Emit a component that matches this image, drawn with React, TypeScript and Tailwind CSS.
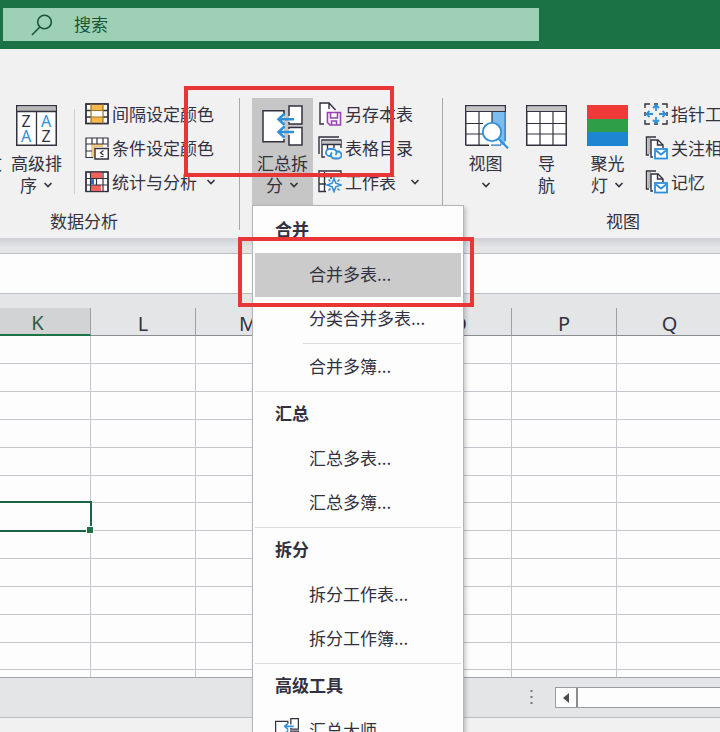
import type { ReactNode } from "react";

const INK = "#33313f";
const BLUE = "#2f8fd8";

function Chevron() {
  return (
    <svg width="10" height="8" viewBox="0 0 10 8" fill="none" stroke={INK} strokeWidth="1.6">
      <path d="M1.5 2 5 5.5 8.5 2" />
    </svg>
  );
}

/* ---------- large icons ---------- */

function SortIcon() {
  return (
    <svg width="41" height="41" viewBox="0 0 41 41">
      <rect x="0.75" y="0.75" width="39.5" height="39.5" fill="#fff" stroke={INK} strokeWidth="1.5" />
      <rect x="1.5" y="1.5" width="38" height="4.5" fill="#b9b9ba" />
      <path d="M1 6.5h39M20.5 6.5v34" stroke={INK} strokeWidth="1.3" />
      <g fontFamily="Noto Sans, sans-serif" fontSize="16" textAnchor="middle">
        <text x="10" y="22" fill={INK}>Z</text>
        <text x="30" y="22" fill={BLUE}>A</text>
        <text x="10" y="37" fill={BLUE}>A</text>
        <text x="30" y="37" fill={INK}>Z</text>
      </g>
    </svg>
  );
}

function MergeIcon({ size = 41 }: { size?: number }) {
  const stroke = size < 41 ? 2.2 : 1.5;
  return (
    <svg width={size} height={size} viewBox="0 0 41 41" fill="none">
      <path d="M22 5.700H0.8v31H22z" fill="#fff" />
      <path d="M22 9V5.700H1v31h21V34" stroke={INK} strokeWidth={stroke} />
      <rect x="27" y="1" width="13" height="18" fill="#fff" />
      <rect x="27" y="22.5" width="13" height="17.5" fill="#fff" />
      <path d="M27 11V1h13v18H27v-2M27 24v-1.500h13V40H27V30" stroke={INK} strokeWidth={stroke} />
      <path d="M32 14.300H17M32 27H17M22.500 8.700 16.500 14.300l6 5.600M22.500 21.400l-6 5.600 6 5.600" stroke={BLUE} strokeWidth="2.6" />
    </svg>
  );
}

function ViewIcon() {
  return (
    <svg className="shrink-0" width="44" height="44" viewBox="0 0 44 44" fill="none">
      <rect x="0.75" y="0.75" width="39.5" height="39.5" fill="#fff" />
      <rect x="27" y="7" width="13" height="33" fill="#7dbcee" />
      <path d="M27 29h8v11h-8z" fill="#fff" />
      <path d="M0.75 40.2V0.75h39.5V7M0.75 40.2H24" stroke={INK} strokeWidth="1.5" />
      <rect x="1.5" y="1.5" width="38" height="4.5" fill="#c4c4c5" />
      <path d="M1 6.500h39M14 6.500v34M27 6.500v12M1 18.500h17M1 29h17" stroke={INK} strokeWidth="1.2" />
      <path d="M40.200 7v29M26 40.200h10" stroke="#1f75bd" strokeWidth="1.3" />
      <circle cx="27" cy="27" r="9.2" fill="#fff" stroke={BLUE} strokeWidth="1.8" />
      <path d="m33.700 34 9.300 9.300" stroke={BLUE} strokeWidth="2" />
    </svg>
  );
}

function NavIcon() {
  return (
    <svg width="41" height="41" viewBox="0 0 41 41">
      <rect x="0.75" y="0.75" width="39.5" height="39.5" fill="#fff" stroke={INK} strokeWidth="1.5" />
      <rect x="1.5" y="1.5" width="38" height="4.5" fill="#c4c4c5" />
      <path d="M1 6.500h39M14 6.500v34M27 6.500v34M1 18.500h39M1 29h39" stroke={INK} strokeWidth="1.2" />
    </svg>
  );
}

function SpotlightIcon() {
  return (
    <svg width="41" height="41" viewBox="0 0 41 41">
      <path fill="#f03a37" d="M0 0h41v14H0z" />
      <path fill="#2f9e48" d="M0 14h41v13H0z" />
      <path fill="#1d86d3" d="M0 27h41v14H0z" />
    </svg>
  );
}

/* ---------- small icons ---------- */

function Small({ children }: { children: ReactNode }) {
  return (
    <svg className="shrink-0" width="24" height="24" viewBox="0 0 24 24" fill="none" stroke={INK} strokeWidth="1.4">
      {children}
    </svg>
  );
}

const IntervalIcon = () => (
  <Small>
    <rect x="1" y="2" width="22" height="19.5" fill="#fff" />
    <path d="M6 2h12v6H6zM6 15h12v6.500H6z" fill="#f9b84e" stroke="none" />
    <path d="M1 2h22v19.500H1zM1 8.500h5M18 8.500h5M1 15h5M18 15h5" />
    <path d="M6 2v19.500M18 2v19.500M6 8.500h12M6 15h12" stroke="#a3701f" strokeWidth="1.200" />
  </Small>
);

const ConditionIcon = () => (
  <Small>
    <path d="M1 2h22v19.500H1z" fill="#fff" stroke="none" />
    <path d="M7 8h11v3H10v11H6V8z" fill="#f9c878" stroke="none" />
    <path d="M8 21.500H1V2h22v9M1 8h22M1 15h6M7 2v6M12 2v6M18 2v6" strokeWidth="1.200" />
    <path d="M10 12.500h13.300V23H10z" fill="#fff" />
    <path d="m18.500 14.500-3 2.200 3 2.200M15.500 20.500h3" strokeWidth="1.200" />
  </Small>
);

const StatsIcon = () => (
  <Small>
    <rect x="1" y="2" width="22" height="19.500" fill="#fff" />
    <path d="M6 2h7v6H6zM6 15h10v6.500H6zM13 2h4v6h-4z" fill="#f4605d" stroke="none" />
    <path d="M1 2h22v19.500H1zM1 8.500h22M1 15h22M5.500 2v19.500M18 2v19.500M11.500 8.500V15" strokeWidth="1.200" />
    <path d="M7.500 9.200v5.200" stroke="#2b62d8" strokeWidth="3" />
  </Small>
);

const SaveSheetIcon = () => (
  <Small>
    <path d="M2 2h9l6 6v3H8v11H2z" fill="#fff" stroke="none" />
    <path d="M6 22H2V1h9l6.500 7M11 1v6" />
    <g stroke="#9a3fb5" strokeWidth="1.600">
      <path d="M9.500 10.500h13V23H12l-2.500-2.500z" fill="#fff" />
      <path d="M12.500 11v5h7v-5M13.500 23v-4h5v4" />
    </g>
  </Small>
);

const CatalogIcon = () => (
  <Small>
    <path d="M1 18V1h20" />
    <path d="M7 21H4V4h19v8" fill="#fff" />
    <path d="M4 5h19v3H4z" fill="#c4c4c5" stroke="none" />
    <path d="M4 8.500h19M9.500 8.500v5M16 8.500V12" />
    <g stroke={BLUE} strokeWidth="1.800">
      <path d="M13 20h-1.500a3.500 3.500 0 0 1 0-7H15a3.500 3.500 0 0 1 2.500 6" fill="#fff" />
      <path d="M18.500 15.500H20a3.500 3.500 0 0 1 0 7h-3.500a3.500 3.500 0 0 1-2.500-6" />
    </g>
  </Small>
);

const WorksheetIcon = () => (
  <Small>
    <path d="M8 21.500H1V1h22v6" fill="#fff" />
    <path d="M1 6.500h22M6.500 2v19.500M13 6.500V9M1 14h7" />
    <path d="m16 8.500 1.800 4.700 5.200 1.800-5.200 1.800L16 21.500l-1.800-4.700L9 15l5.200-1.800z" fill="#fff" stroke={BLUE} strokeWidth="1.600" />
    <path d="m10.500 9.500 2 2M21.500 9.500l-2 2M10.500 20.500l2-2M21.500 20.500l-2-2" stroke={BLUE} strokeWidth="1.600" />
  </Small>
);

const PointerIcon = () => (
  <Small>
    <path d="M1 6V2h5M10 2h4M18 2h5v4M23 18v4h-5M14 22h-4M6 22H1v-4M1 10v4M23 10v4" />
    <g stroke={BLUE} strokeWidth="1.800">
      <path d="M12 9V3M9 6l3-3 3 3M12 15v6M9 18l3 3 3-3M9 12H2.500M5.500 9l-3 3 3 3M15 12h6.500M18.500 9l3 3-3 3" />
    </g>
  </Small>
);

const MailPageIcon = () => (
  <Small>
    <path d="M5 19H2.500V1H12" />
    <path d="M3.500 2H7v16H3.500z" fill="#b9b9ba" stroke="none" />
    <path d="M9 21H7V4h7l5 5v3" fill="#fff" />
    <path d="M13.500 4v5h5.500" />
    <g stroke={BLUE} strokeWidth="1.800">
      <rect x="11" y="13" width="12" height="9.500" fill="#fff" />
      <path d="m12 14.500 5 4 5-4" />
    </g>
  </Small>
);

/* ---------- ribbon parts ---------- */

function BigButton({ icon, lines, active, arrow }: { icon: ReactNode; lines: string[]; active?: boolean; arrow?: boolean }) {
  return (
    <button
      type="button"
      className={`flex h-[107px] w-[61px] shrink-0 flex-col items-center pt-[7px] text-[17px] leading-[22px] ${active ? "bg-[#c6c6c6]" : ""}`}
    >
      <span className="flex h-[47px] w-[41px] items-start">{icon}</span>
      {lines.map((line, i) => (
        <span key={i} className="flex h-[22px] items-center gap-[6px] whitespace-nowrap">
          {line || null}
          {arrow && i === lines.length - 1 && <Chevron />}
        </span>
      ))}
    </button>
  );
}

function SmallButton({ icon, label, arrow }: { icon: ReactNode; label: string; arrow?: boolean }) {
  return (
    <button type="button" className="flex h-[34px] items-center gap-[3px] text-[17px] leading-[34px] whitespace-nowrap">
      {icon}
      {label}
      {arrow && (
        <span className="ml-auto">
          <Chevron />
        </span>
      )}
    </button>
  );
}

/* ---------- drop-down menu ---------- */

function Heading({ children }: { children: ReactNode }) {
  return <div className="h-[44px] pl-5 text-[17px] leading-[40px] font-bold">{children}</div>;
}

function Item({ label, selected, icon }: { label: string; selected?: boolean; icon?: ReactNode }) {
  return (
    <button
      type="button"
      role="menuitem"
      className={`flex h-[44px] w-full pl-5 text-left text-[17px] leading-[42px] ${selected ? "bg-[#cbcbcb]" : ""}`}
    >
      <span className="flex h-[42px] w-[34px] items-center">{icon}</span>
      {label}
    </button>
  );
}

function Rule({ inset }: { inset?: boolean }) {
  return <div role="separator" className={`mt-[2px] mb-px h-px bg-[#dcdde0] ${inset ? "ml-12" : ""}`} />;
}

function MergeMenu() {
  return (
    <div
      role="menu"
      className="absolute top-[107px] left-0 z-20 w-[212px] border border-[#b4b5b8] bg-[#fdfdfe] px-[2px] pt-[3px] shadow-[2px_2px_4px_rgba(0,0,0,0.2)]"
    >
      <Heading>合并</Heading>
      <Item label="合并多表..." selected />
      <Item label="分类合并多表..." />
      <Rule inset />
      <Item label="合并多簿..." />
      <Rule />
      <Heading>汇总</Heading>
      <Item label="汇总多表..." />
      <Item label="汇总多簿..." />
      <Rule />
      <Heading>拆分</Heading>
      <Item label="拆分工作表..." />
      <Item label="拆分工作簿..." />
      <Rule />
      <Heading>高级工具</Heading>
      <Item label="汇总大师" icon={<MergeIcon size={24} />} />
    </div>
  );
}

/* ---------- sheet ---------- */

const columns = [
  { name: "K", width: "w-[106px]" },
  { name: "L", width: "w-[105px]" },
  { name: "M", width: "w-[105px]" },
  { name: "N", width: "w-[106px]" },
  { name: "O", width: "w-[105px]" },
  { name: "P", width: "w-[105px]" },
  { name: "Q", width: "w-[106px]" },
];

function rowHeight(row: number) {
  if (row === 12) return "h-[7px]";
  return row % 6 === 5 ? "h-[27px]" : "h-[28px]";
}

function Sheet() {
  return (
    <div className="overflow-hidden border-b border-[#a5a6a9] bg-[#e4e5e7] pt-[14px]">
      <table className="-ml-[15px] w-[738px] min-w-[calc(100%+18px)] table-fixed border-separate border-spacing-0">
        <thead>
          <tr>
            {columns.map((c) => (
              <th
                key={c.name}
                scope="col"
                className={`h-[28px] border-r border-r-[#a0a1a4] p-0 font-['Noto_Sans',sans-serif] text-[20px] leading-[22px] font-normal ${c.width} ${
                  c.name === "K"
                    ? "border-b-2 border-b-[#1b7244] bg-[#d2d3d5] pt-1 text-[#2d5c46]"
                    : "border-b border-b-[#8b8c90] pt-[5px] text-[#33313f]"
                }`}
              >
                {c.name}
              </th>
            ))}
          </tr>
        </thead>
        <tbody className="bg-[#fdfdfe]">
          {Array.from({ length: 13 }, (_, row) => (
            <tr key={row}>
              {columns.map((c) => (
                <td key={c.name} className={`relative border-r border-[#c6c7cc] p-0 ${rowHeight(row)} ${row < 12 ? "border-b" : ""}`}>
                  {c.name === "K" && row === 6 && (
                    <div className="absolute -inset-[2px] z-10 border-2 border-[#1b6445]">
                      <span className="absolute -right-[4px] -bottom-[4px] size-[8px] border border-white bg-[#1b7244]" />
                    </div>
                  )}
                </td>
              ))}
            </tr>
          ))}
        </tbody>
      </table>
    </div>
  );
}

export default function App() {
  return (
    <div className="relative flex h-screen flex-col overflow-hidden bg-[#f1f1f2] font-['Noto_Sans_CJK_SC',sans-serif] text-[#33313f]">
      <header className="h-[49px] shrink-0 bg-[#1b7244] pt-2 pl-[3px]">
        <div className="flex h-[33px] w-3/4 max-w-[536px] items-center bg-[#9ed0b5] pl-7">
          <svg width="22" height="22" viewBox="0 0 22 22" fill="none" stroke="#17553a" strokeWidth="1.6">
            <circle cx="13.500" cy="8" r="6.800" />
            <path d="M8.800 13 1 21" />
          </svg>
          <input
            type="text"
            aria-label="搜索"
            placeholder="搜索"
            className="ml-[21px] h-[33px] min-w-0 flex-1 bg-transparent pb-[3px] text-[17px] outline-none placeholder:text-[#17553a] placeholder:opacity-100"
          />
        </div>
      </header>

      <nav className="flex h-[189px] shrink-0 items-start pt-[49px]">
        <section className="w-[239px] shrink-0">
          <div className="flex h-[107px]">
            <span className="flex w-[2px] justify-end overflow-hidden pt-[54px] text-[17px] leading-[22px]">文</span>
            <div className="ml-1">
              <BigButton icon={<SortIcon />} lines={["高级排", "序"]} arrow />
            </div>
            <div className="mt-[11px] ml-[7px] h-[85px] w-px shrink-0 bg-[#cfd0d2]" />
            <div className="-mt-px ml-[10px] flex w-[131px] flex-col">
              <SmallButton icon={<IntervalIcon />} label="间隔设定颜色" />
              <SmallButton icon={<ConditionIcon />} label="条件设定颜色" />
              <SmallButton icon={<StatsIcon />} label="统计与分析" arrow />
            </div>
          </div>
          <h2 className="mt-[3px] pl-[50px] text-[17px] leading-[26px]">数据分析</h2>
        </section>

        <section className="flex h-[132px] w-[204px] shrink-0 border-x border-[#a7a8ab]">
          <div className="relative ml-3 shrink-0">
            <BigButton icon={<MergeIcon />} lines={["汇总拆", "分"]} active arrow />
            <MergeMenu />
          </div>
          <div className="-mt-px ml-[5px] flex w-[102px] flex-col">
            <SmallButton icon={<SaveSheetIcon />} label="另存本表" />
            <SmallButton icon={<CatalogIcon />} label="表格目录" />
            <SmallButton icon={<WorksheetIcon />} label="工作表" arrow />
          </div>
        </section>

        <section className="min-w-0 flex-1 overflow-hidden pl-3">
          <div className="flex h-[107px]">
            <BigButton icon={<ViewIcon />} lines={["视图", ""]} arrow />
            <BigButton icon={<NavIcon />} lines={["导", "航"]} />
            <BigButton icon={<SpotlightIcon />} lines={["聚光", "灯"]} arrow />
            <div className="-mt-px ml-[6px] flex flex-col">
              <SmallButton icon={<PointerIcon />} label="指针工具" />
              <SmallButton icon={<MailPageIcon />} label="关注相关" />
              <SmallButton icon={<MailPageIcon />} label="记忆" />
            </div>
          </div>
          <h2 className="mt-[3px] pl-[151px] text-[17px] leading-[26px]">视图</h2>
        </section>
      </nav>

      <div className="h-[15px] shrink-0 bg-linear-to-b from-[#cfd0d3] to-[#e4e5e7] to-60%" />
      <input
        type="text"
        aria-label="编辑栏"
        className="h-[41px] w-full shrink-0 border-y border-[#bcbdc0] bg-[#fdfdfe] px-3 outline-none"
      />

      <main className="shrink-0">
        <Sheet />
      </main>

      <div className="flex h-[40px] shrink-0 items-center justify-end border-b border-[#bcbdc0] bg-[#e4e5e7]">
        <div className="flex w-[190px] items-center">
          <svg width="3" height="15" viewBox="0 0 3 15" fill="#77787c">
            <path d="M0.500 0h2v2h-2zM0.500 6h2v2h-2zM0.500 12h2v2h-2z" />
          </svg>
          <div className="ml-[22px] flex h-[21px] flex-1 border border-r-0 border-[#9b9ca0] bg-[#fdfdfe]">
            <button type="button" aria-label="向左滚动" className="flex w-[22px] items-center justify-center border-r-2 border-[#8b8c90]">
              <svg width="6" height="10" viewBox="0 0 6 10" fill="#4b4b50">
                <path d="M6 0v10L0 5z" />
              </svg>
            </button>
          </div>
        </div>
      </div>

      <div className="pointer-events-none absolute top-[86px] left-[184px] z-30 h-[91px] w-[210px] border-4 border-[#e83636]" />
      <div className="pointer-events-none absolute top-[237px] left-[238px] z-30 h-[70px] w-[236px] border-4 border-[#e83636]" />
    </div>
  );
}
